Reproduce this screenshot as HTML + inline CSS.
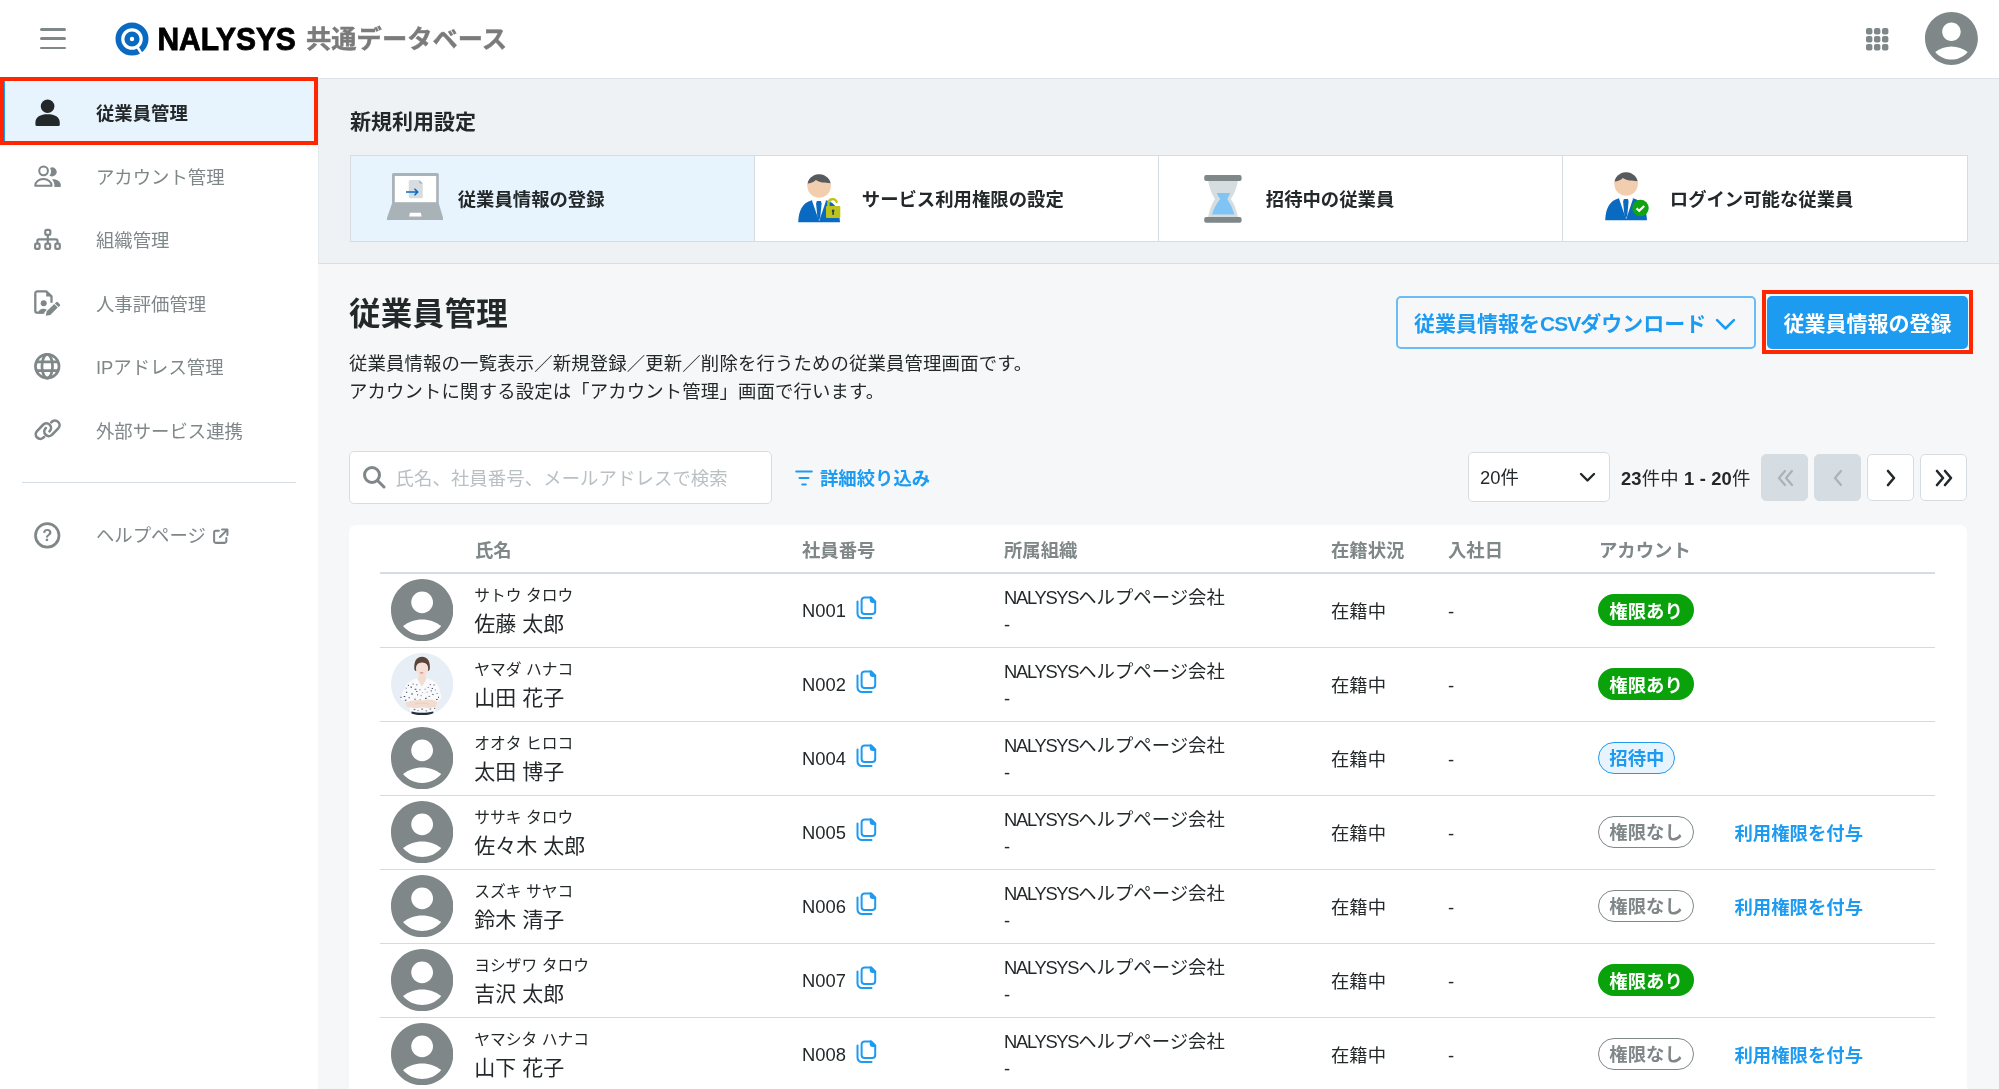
<!DOCTYPE html>
<html lang="ja">
<head>
<meta charset="utf-8">
<title>NALYSYS 共通データベース</title>
<style>
*{box-sizing:border-box;margin:0;padding:0}
html,body{width:1999px;height:1089px;overflow:hidden;background:#f6f7f9}
body{font-family:"Liberation Sans","Noto Sans CJK JP",sans-serif;color:#23282a;position:relative;font-size:18.375px;line-height:1.5}
body>*{will-change:transform}
/* header */
#hd{position:absolute;left:0;top:0;width:1999px;height:78.500px;background:#fff;border-bottom:1px solid #dde3e8}
#hd .ham{position:absolute;left:40px;top:28px;width:26px;height:22px}
#hd .ham i{position:absolute;left:0;width:26px;height:2.700px;border-radius:2px;background:#7f8789}
#logo{position:absolute;left:115.300px;top:21.700px;width:34px;height:34px}
#brand{position:absolute;left:157.500px;top:17.400px;font-weight:700;font-size:30px;line-height:44px;color:#000;letter-spacing:-0.100px;white-space:nowrap;-webkit-text-stroke:0.800px #000;transform:scale(1,1.070);transform-origin:0 50%}
#sub{position:absolute;left:306px;top:17px;font-weight:700;font-size:25.300px;line-height:44px;color:#7b7b7b;white-space:nowrap;-webkit-text-stroke:0.400px #7b7b7b}
#grid{position:absolute;left:1866.200px;top:27.700px;width:22.400px;height:22.400px;overflow:visible}
#me{position:absolute;left:1925.100px;top:12.300px;width:52.900px;height:52.900px}
/* sidebar */
#sb{position:absolute;left:0;top:78.500px;width:317.500px;height:1011px;background:#fff}
.mi{position:absolute;left:0;width:318px;height:63.5px;color:#7f8789;font-size:18.375px;line-height:63.5px;white-space:nowrap}
.mi span{position:absolute;left:96px;top:1px}
.mi svg{position:absolute;left:33px;top:18px;width:28px;height:28px}
#act{position:absolute;left:0;top:76.600px;width:318.100px;height:68px;border:4px solid #ff2600;background:#e8f4fd}
#act:before{content:"";position:absolute;left:0;top:0;width:1.200px;height:60px;background:#1d9bf0}
#sbdiv{position:absolute;left:22px;top:482px;width:274px;height:1px;background:#d5dde3}
/* top band */
#band{position:absolute;left:317.500px;top:78.500px;width:1682px;height:184.700px;background:#eef2f5;border-bottom:1px solid #d9e0e5;border-left:1px solid #e3e8ec}
#bt{position:absolute;left:350px;top:107px;font-size:21px;font-weight:700;line-height:30px;color:#23282a}
#cards{position:absolute;left:350px;top:154.700px;width:1617.500px;height:87px;border:1px solid #d5dde3;background:#fff}
.card{position:absolute;top:0;height:85px;width:404px;border-left:1px solid #d5dde3;font-weight:700;font-size:18.375px;line-height:85px;color:#23282a;white-space:nowrap}
.card span{position:absolute;left:106.700px;top:0.900px}
.card svg{position:absolute}
/* page head */
#h1{position:absolute;left:349px;top:290px;font-size:31.5px;font-weight:700;line-height:48px;color:#23282a;letter-spacing:0.3px}
#desc{position:absolute;left:349px;top:350px;font-size:18.375px;letter-spacing:0.160px;line-height:27.500px;color:#23282a;white-space:nowrap}
#csv{position:absolute;left:1396px;top:295.500px;width:359.500px;height:53.400px;border:2px solid #6bbcf5;border-radius:5px;color:#1d9bf0;font-weight:700;font-size:21px;line-height:52.500px;white-space:nowrap;padding-left:16px}
#csv svg{position:absolute;left:316.500px;top:19.500px;width:21px;height:12.600px}
#regbox{position:absolute;left:1761.800px;top:290.100px;width:211.400px;height:63.500px;border:4px solid #ff2600}
#reg{position:absolute;left:1766.600px;top:295.500px;width:201.200px;height:53.400px;border-radius:5px;background:#1d9bf0;color:#fff;font-weight:700;font-size:21px;line-height:56.500px;text-align:center;white-space:nowrap}
/* toolbar */
#search{position:absolute;left:349px;top:451px;width:423px;height:53px;border:1px solid #d5dde3;border-radius:5px;background:#fff;color:#b9c0c4;font-size:18.375px;line-height:51px;white-space:nowrap}
#search span{position:absolute;left:45.500px;top:1px;letter-spacing:0.100px}
#search svg{position:absolute;left:12.300px;top:13px;width:24px;height:24px}
#filter{position:absolute;left:795px;top:463px;color:#1d9bf0;font-weight:700;font-size:18.375px;line-height:32px;white-space:nowrap}
#filter svg{position:absolute;left:0;top:6.500px;width:18px;height:16px}
#filter span{margin-left:25px}
#sel{position:absolute;left:1468px;top:452.300px;width:142px;height:50px;border:1px solid #d5dde3;border-radius:5px;background:#fff;font-size:18.375px;line-height:50px;padding-left:11px;color:#23282a}
#sel svg{position:absolute;left:110px;top:19px;width:17px;height:11px}
#cnt{position:absolute;left:1621px;top:463px;letter-spacing:0.150px;font-size:18.375px;line-height:32px;white-space:nowrap;color:#23282a}
#cnt b{font-weight:700}
.pg{position:absolute;top:454px;width:47px;height:47px;border-radius:5px;border:1px solid #d5dde3;background:#fff}
.pg.dis{background:#d5dde3;border-color:#d5dde3}
.pg svg{position:absolute;left:12px;top:12px;width:22px;height:22px}
/* table */
#tbl{position:absolute;left:349px;top:525px;width:1618px;height:600px;background:#fff;border-radius:7px}
.th{position:absolute;top:10.700px;font-size:18.375px;font-weight:700;color:#7f8789;line-height:30px;white-space:nowrap}
#thline{position:absolute;left:31px;top:47.100px;width:1555px;height:1.5px;background:#d5dde3}
.row{position:absolute;left:31px;width:1555px;height:74.600px;border-bottom:1.500px solid #d3dbe1}
.row .av{position:absolute;left:11.200px;top:5.800px;width:62.300px;height:62.300px}
.row div,.row span{position:absolute;white-space:nowrap}
.kana{left:94.300px;top:10.500px;font-size:15.75px;line-height:24px}
.nm{left:94.300px;top:34.500px;font-size:21px;line-height:32px}
.no{left:422px;top:23.300px;font-size:18.375px;line-height:30px}
.no .cp{position:absolute;left:53.500px;top:-0.800px;width:21px;height:24px}
.row .org .lt{position:static;letter-spacing:-1.300px}
.org{left:624px;top:10.100px;font-size:18.375px;line-height:30px}
.org2{left:624px;top:37.400px;font-size:18.375px;line-height:30px}
.st{left:951px;top:24px;font-size:18.375px;line-height:30px}
.jd{left:1068px;top:24px;font-size:18.375px;line-height:30px}
.bd{left:1218.300px;top:21px;height:32px;border-radius:16px;font-size:18.375px;font-weight:700;line-height:30px;padding:0 10px}
.bd.ari{background:#0aa20a;color:#fff;line-height:35.400px;padding:0 11px}
.bd.inv{background:#e8f4fd;color:#1d9bf0;border:1.800px solid #1d9bf0;line-height:31.800px}
.bd.nashi{background:#fff;color:#7f8789;border:1.800px solid #7f8789;line-height:31.800px}
.lk{left:1354.500px;top:24px;color:#1d9bf0;font-weight:700;font-size:18.375px;line-height:30px}
</style>
</head>
<body>
<!-- table -->
<div id="tbl">
<div class="th" style="left:126px">氏名</div>
<div class="th" style="left:453px">社員番号</div>
<div class="th" style="left:655px">所属組織</div>
<div class="th" style="left:982px">在籍状況</div>
<div class="th" style="left:1099px">入社日</div>
<div class="th" style="left:1250px">アカウント</div>
<div id="thline"></div>
<div class="row" style="top:48px">
<svg class="av" viewBox="2 2 20 20"><path fill="#7f8789" d="M12 2C6.480 2 2 6.480 2 12s4.480 10 10 10 10-4.480 10-10S17.520 2 12 2zm0 4c1.930 0 3.500 1.570 3.500 3.500S13.930 13 12 13s-3.500-1.570-3.500-3.500S10.070 6 12 6zm0 14c-2.030 0-4.430-.820-6.140-2.880C7.550 15.800 9.680 15 12 15s4.450.800 6.140 2.120C16.430 19.180 14.030 20 12 20z"/></svg>
<div class="kana">サトウ タロウ</div><div class="nm">佐藤 太郎</div>
<div class="no">N001<svg class="cp" viewBox="0 0 21 24" fill="none" stroke="#1d9bf0" stroke-width="2" stroke-linecap="round" stroke-linejoin="round"><path d="M8.600 1.400h6.600l4 4v9.500a3 3 0 0 1-3 3h-7.600a3 3 0 0 1-3-3v-10.500a3 3 0 0 1 3-3z"/><path d="M14.700 1.400v2.600a2 2 0 0 0 2 2h2.500z" fill="#1d9bf0"/><path d="M1.500 5.500v12.100a4.500 4.500 0 0 0 4.500 4.500h9.500"/></svg></div>
<div class="org"><span class="lt">NALYSYS</span>ヘルプページ会社</div><div class="org2">-</div>
<div class="st">在籍中</div><div class="jd">-</div>
<span class="bd ari">権限あり</span>
</div>
<div class="row" style="top:122px">
<svg class="av" viewBox="0 0 62 62"><defs><clipPath id="cp"><circle cx="31" cy="31" r="31"/></clipPath></defs><g clip-path="url(#cp)"><rect width="62" height="62" fill="#e8eef5"/><path d="M23.300 16.500c-1-7.500 2-12.800 7.600-12.800s8.600 5.300 7.600 12.800l-1.200 1.500h-12.800z" fill="#5a4338"/><ellipse cx="30.900" cy="15.600" rx="6.100" ry="7.200" fill="#f4e0d6"/><path d="M24.600 12.800c1.500-3.800 4-5.300 6.400-5.300s5 1.500 6.300 5.300c-2-2.400-4-3.300-6.300-3.300s-4.400.900-6.400 3.300z" fill="#5a4338"/><ellipse cx="30.500" cy="19.700" rx="1.900" ry="0.900" fill="#e9929b"/><path d="M27.600 21.500h6.700v8h-6.700z" fill="#f3ddd2"/><path d="M14 33c3-4.500 8-6.500 12.500-8l4.300 7.500 4.500-7.500c4.500 1.500 9.500 3.500 12 8l3.200 11.500-4.500 4.500-1.500 9.500h-25.500l-1.500-9.500-8.500-3.500z" fill="#f9fafc"/><path d="M26 25.500l4.800 8 4.700-8c-1.500-.800-2.500-1.200-3.200-1.500h-3.200c-.900.400-2 .900-3.100 1.500z" fill="#f3ddd2"/><rect x="14.5" y="34.5" width="1.1" height="1" fill="#6a6a8c"/><rect x="16.8" y="31.6" width="0.9" height="1.2" fill="#3b3a5c"/><rect x="19.5" y="33.4" width="1.3" height="1.2" fill="#3b3a5c"/><rect x="21.5" y="30.5" width="1.1" height="0.8" fill="#3b3a5c"/><rect x="23.6" y="35.6" width="1.6" height="1" fill="#3b3a5c"/><rect x="25.2" y="31.3" width="1.1" height="0.8" fill="#3b3a5c"/><rect x="27.9" y="36.2" width="1.6" height="0.8" fill="#8b7fa0"/><rect x="30.8" y="39.2" width="0.9" height="0.8" fill="#8b7fa0"/><rect x="33.5" y="35.5" width="0.9" height="1.2" fill="#8b7fa0"/><rect x="36.3" y="33.8" width="1.6" height="0.8" fill="#8b7fa0"/><rect x="38.6" y="30.8" width="0.9" height="1.2" fill="#4b4a70"/><rect x="40.5" y="34.8" width="1.3" height="1" fill="#4b4a70"/><rect x="42.4" y="31.2" width="0.9" height="1.2" fill="#4b4a70"/><rect x="43.6" y="36.4" width="1.1" height="0.8" fill="#6a6a8c"/><rect x="45.3" y="39.8" width="1.1" height="1" fill="#8b7fa0"/><rect x="46.8" y="43.5" width="0.9" height="1.2" fill="#3b3a5c"/><rect x="41.2" y="40.8" width="1.1" height="1" fill="#3b3a5c"/><rect x="37.3" y="42.7" width="1.6" height="1" fill="#8b7fa0"/><rect x="33.9" y="44.6" width="1.6" height="1" fill="#2e2e48"/><rect x="29.4" y="42.1" width="1.1" height="0.8" fill="#6a6a8c"/><rect x="26.1" y="41.0" width="0.9" height="1.2" fill="#4b4a70"/><rect x="23.2" y="45.5" width="1.6" height="1" fill="#6a6a8c"/><rect x="20.3" y="40.2" width="1.3" height="1.2" fill="#2e2e48"/><rect x="17.6" y="43.8" width="0.9" height="1.2" fill="#3b3a5c"/><rect x="15.0" y="38.6" width="1.1" height="1" fill="#2e2e48"/><rect x="12.6" y="42.8" width="1.6" height="1" fill="#4b4a70"/><rect x="9.5" y="43.6" width="0.9" height="1.2" fill="#3b3a5c"/><rect x="18.9" y="48.1" width="1.3" height="1" fill="#8b7fa0"/><rect x="22.6" y="55.6" width="1.6" height="1.2" fill="#6a6a8c"/><rect x="26.5" y="56.8" width="0.9" height="0.8" fill="#2e2e48"/><rect x="30.2" y="55.3" width="1.6" height="1.2" fill="#6a6a8c"/><rect x="34.6" y="56.9" width="0.9" height="1.2" fill="#3b3a5c"/><rect x="38.4" y="55.2" width="1.6" height="1" fill="#6a6a8c"/><rect x="42.8" y="54.6" width="1.3" height="0.8" fill="#2e2e48"/><rect x="25.0" y="37.8" width="1.3" height="0.8" fill="#2e2e48"/><rect x="35.5" y="38.5" width="0.9" height="1" fill="#8b7fa0"/><rect x="39.5" y="37.2" width="1.1" height="1" fill="#3b3a5c"/><rect x="28.5" y="46.2" width="1.1" height="1" fill="#4b4a70"/><rect x="44.8" y="45.8" width="1.6" height="0.8" fill="#2e2e48"/><rect x="13.8" y="46.5" width="1.6" height="1" fill="#4b4a70"/><path d="M14.600 49.500c6-2.500 12-3.300 17-2.200 5-1.600 10-1.300 14.300 1.200l-.6 4.800c-5 1.800-10 1.800-14.200.6-5 1.300-10.500 1.200-15.500-.6z" fill="#f2dccf"/><path d="M24 50.800c4-1.200 9-1.500 14 .2" stroke="#e2c4b4" stroke-width="0.600" fill="none"/><path d="M20.500 58.300c6 1.600 15 1.600 21.500 0l.5 4h-22.500z" fill="#262c3a"/></g></svg>
<div class="kana">ヤマダ ハナコ</div><div class="nm">山田 花子</div>
<div class="no">N002<svg class="cp" viewBox="0 0 21 24" fill="none" stroke="#1d9bf0" stroke-width="2" stroke-linecap="round" stroke-linejoin="round"><path d="M8.600 1.400h6.600l4 4v9.500a3 3 0 0 1-3 3h-7.600a3 3 0 0 1-3-3v-10.500a3 3 0 0 1 3-3z"/><path d="M14.700 1.400v2.600a2 2 0 0 0 2 2h2.500z" fill="#1d9bf0"/><path d="M1.500 5.500v12.100a4.500 4.500 0 0 0 4.500 4.500h9.500"/></svg></div>
<div class="org"><span class="lt">NALYSYS</span>ヘルプページ会社</div><div class="org2">-</div>
<div class="st">在籍中</div><div class="jd">-</div>
<span class="bd ari">権限あり</span>
</div>
<div class="row" style="top:196px">
<svg class="av" viewBox="2 2 20 20"><path fill="#7f8789" d="M12 2C6.480 2 2 6.480 2 12s4.480 10 10 10 10-4.480 10-10S17.520 2 12 2zm0 4c1.930 0 3.500 1.570 3.500 3.500S13.930 13 12 13s-3.500-1.570-3.500-3.500S10.070 6 12 6zm0 14c-2.030 0-4.430-.820-6.140-2.880C7.550 15.800 9.680 15 12 15s4.450.800 6.140 2.120C16.430 19.180 14.030 20 12 20z"/></svg>
<div class="kana">オオタ ヒロコ</div><div class="nm">太田 博子</div>
<div class="no">N004<svg class="cp" viewBox="0 0 21 24" fill="none" stroke="#1d9bf0" stroke-width="2" stroke-linecap="round" stroke-linejoin="round"><path d="M8.600 1.400h6.600l4 4v9.500a3 3 0 0 1-3 3h-7.600a3 3 0 0 1-3-3v-10.500a3 3 0 0 1 3-3z"/><path d="M14.700 1.400v2.600a2 2 0 0 0 2 2h2.500z" fill="#1d9bf0"/><path d="M1.500 5.500v12.100a4.500 4.500 0 0 0 4.500 4.500h9.500"/></svg></div>
<div class="org"><span class="lt">NALYSYS</span>ヘルプページ会社</div><div class="org2">-</div>
<div class="st">在籍中</div><div class="jd">-</div>
<span class="bd inv">招待中</span>
</div>
<div class="row" style="top:270px">
<svg class="av" viewBox="2 2 20 20"><path fill="#7f8789" d="M12 2C6.480 2 2 6.480 2 12s4.480 10 10 10 10-4.480 10-10S17.520 2 12 2zm0 4c1.930 0 3.500 1.570 3.500 3.500S13.930 13 12 13s-3.500-1.570-3.500-3.500S10.070 6 12 6zm0 14c-2.030 0-4.430-.820-6.140-2.880C7.550 15.800 9.680 15 12 15s4.450.800 6.140 2.120C16.430 19.180 14.030 20 12 20z"/></svg>
<div class="kana">ササキ タロウ</div><div class="nm">佐々木 太郎</div>
<div class="no">N005<svg class="cp" viewBox="0 0 21 24" fill="none" stroke="#1d9bf0" stroke-width="2" stroke-linecap="round" stroke-linejoin="round"><path d="M8.600 1.400h6.600l4 4v9.500a3 3 0 0 1-3 3h-7.600a3 3 0 0 1-3-3v-10.500a3 3 0 0 1 3-3z"/><path d="M14.700 1.400v2.600a2 2 0 0 0 2 2h2.500z" fill="#1d9bf0"/><path d="M1.500 5.500v12.100a4.500 4.500 0 0 0 4.500 4.500h9.500"/></svg></div>
<div class="org"><span class="lt">NALYSYS</span>ヘルプページ会社</div><div class="org2">-</div>
<div class="st">在籍中</div><div class="jd">-</div>
<span class="bd nashi">権限なし</span><span class="lk">利用権限を付与</span>
</div>
<div class="row" style="top:344px">
<svg class="av" viewBox="2 2 20 20"><path fill="#7f8789" d="M12 2C6.480 2 2 6.480 2 12s4.480 10 10 10 10-4.480 10-10S17.520 2 12 2zm0 4c1.930 0 3.500 1.570 3.500 3.500S13.930 13 12 13s-3.500-1.570-3.500-3.500S10.070 6 12 6zm0 14c-2.030 0-4.430-.820-6.140-2.880C7.550 15.800 9.680 15 12 15s4.450.800 6.140 2.120C16.430 19.180 14.030 20 12 20z"/></svg>
<div class="kana">スズキ サヤコ</div><div class="nm">鈴木 清子</div>
<div class="no">N006<svg class="cp" viewBox="0 0 21 24" fill="none" stroke="#1d9bf0" stroke-width="2" stroke-linecap="round" stroke-linejoin="round"><path d="M8.600 1.400h6.600l4 4v9.500a3 3 0 0 1-3 3h-7.600a3 3 0 0 1-3-3v-10.500a3 3 0 0 1 3-3z"/><path d="M14.700 1.400v2.600a2 2 0 0 0 2 2h2.500z" fill="#1d9bf0"/><path d="M1.500 5.500v12.100a4.500 4.500 0 0 0 4.500 4.500h9.500"/></svg></div>
<div class="org"><span class="lt">NALYSYS</span>ヘルプページ会社</div><div class="org2">-</div>
<div class="st">在籍中</div><div class="jd">-</div>
<span class="bd nashi">権限なし</span><span class="lk">利用権限を付与</span>
</div>
<div class="row" style="top:418px">
<svg class="av" viewBox="2 2 20 20"><path fill="#7f8789" d="M12 2C6.480 2 2 6.480 2 12s4.480 10 10 10 10-4.480 10-10S17.520 2 12 2zm0 4c1.930 0 3.500 1.570 3.500 3.500S13.930 13 12 13s-3.500-1.570-3.500-3.500S10.070 6 12 6zm0 14c-2.030 0-4.430-.820-6.140-2.880C7.550 15.800 9.680 15 12 15s4.450.800 6.140 2.120C16.430 19.180 14.030 20 12 20z"/></svg>
<div class="kana">ヨシザワ タロウ</div><div class="nm">吉沢 太郎</div>
<div class="no">N007<svg class="cp" viewBox="0 0 21 24" fill="none" stroke="#1d9bf0" stroke-width="2" stroke-linecap="round" stroke-linejoin="round"><path d="M8.600 1.400h6.600l4 4v9.500a3 3 0 0 1-3 3h-7.600a3 3 0 0 1-3-3v-10.500a3 3 0 0 1 3-3z"/><path d="M14.700 1.400v2.600a2 2 0 0 0 2 2h2.500z" fill="#1d9bf0"/><path d="M1.500 5.500v12.100a4.500 4.500 0 0 0 4.500 4.500h9.500"/></svg></div>
<div class="org"><span class="lt">NALYSYS</span>ヘルプページ会社</div><div class="org2">-</div>
<div class="st">在籍中</div><div class="jd">-</div>
<span class="bd ari">権限あり</span>
</div>
<div class="row" style="top:492px">
<svg class="av" viewBox="2 2 20 20"><path fill="#7f8789" d="M12 2C6.480 2 2 6.480 2 12s4.480 10 10 10 10-4.480 10-10S17.520 2 12 2zm0 4c1.930 0 3.500 1.570 3.500 3.500S13.930 13 12 13s-3.500-1.570-3.500-3.500S10.070 6 12 6zm0 14c-2.030 0-4.430-.820-6.140-2.880C7.550 15.800 9.680 15 12 15s4.450.800 6.140 2.120C16.430 19.180 14.030 20 12 20z"/></svg>
<div class="kana">ヤマシタ ハナコ</div><div class="nm">山下 花子</div>
<div class="no">N008<svg class="cp" viewBox="0 0 21 24" fill="none" stroke="#1d9bf0" stroke-width="2" stroke-linecap="round" stroke-linejoin="round"><path d="M8.600 1.400h6.600l4 4v9.500a3 3 0 0 1-3 3h-7.600a3 3 0 0 1-3-3v-10.500a3 3 0 0 1 3-3z"/><path d="M14.700 1.400v2.600a2 2 0 0 0 2 2h2.500z" fill="#1d9bf0"/><path d="M1.500 5.500v12.100a4.500 4.500 0 0 0 4.500 4.500h9.500"/></svg></div>
<div class="org"><span class="lt">NALYSYS</span>ヘルプページ会社</div><div class="org2">-</div>
<div class="st">在籍中</div><div class="jd">-</div>
<span class="bd nashi">権限なし</span><span class="lk">利用権限を付与</span>
</div>
</div>

<!-- header -->
<div id="hd">
<div class="ham"><i style="top:0.200px"></i><i style="top:9.400px"></i><i style="top:18.700px"></i></div>
<svg id="logo" viewBox="0 0 34 34"><circle cx="17" cy="17" r="13.650" fill="none" stroke="#0a6ac2" stroke-width="5.700"/><circle cx="17" cy="17" r="4.900" fill="none" stroke="#0a6ac2" stroke-width="5.400"/><path d="M21.500 23.500l5.500 9" stroke="#fff" stroke-width="2.400" fill="none"/></svg>
<div id="brand">NALYSYS</div>
<div id="sub">共通データベース</div>
<svg id="grid" viewBox="0 0 22.400 22.400" fill="#7f8789"><rect x="0" y="0" width="6.400" height="6.400" rx="2"/><rect x="8" y="0" width="6.400" height="6.400" rx="2"/><rect x="16" y="0" width="6.400" height="6.400" rx="2"/><rect x="0" y="8" width="6.400" height="6.400" rx="2"/><rect x="8" y="8" width="6.400" height="6.400" rx="2"/><rect x="16" y="8" width="6.400" height="6.400" rx="2"/><rect x="0" y="16" width="6.400" height="6.400" rx="2"/><rect x="8" y="16" width="6.400" height="6.400" rx="2"/><rect x="16" y="16" width="6.400" height="6.400" rx="2"/></svg>
<svg id="me" viewBox="2 2 20 20"><path fill="#7f8789" d="M12 2C6.480 2 2 6.480 2 12s4.480 10 10 10 10-4.480 10-10S17.520 2 12 2zm0 4c1.930 0 3.500 1.570 3.500 3.500S13.930 13 12 13s-3.500-1.570-3.500-3.500S10.070 6 12 6zm0 14c-2.030 0-4.430-.820-6.140-2.880C7.550 15.800 9.680 15 12 15s4.450.800 6.140 2.120C16.430 19.180 14.030 20 12 20z"/></svg>
</div>

<!-- sidebar -->
<div id="sb"></div>
<div id="act"></div>
<div class="mi" style="top:81px;color:#23282a;font-weight:700"><svg viewBox="0 0 28 28" fill="#23282a"><circle cx="14.600" cy="7.300" r="6.800"/><path d="M2.400 25.400v-1.500c0-6 5-8.600 12.200-8.600s12.200 2.600 12.200 8.600v1.500a1.500 1.500 0 0 1-1.500 1.500h-21.400a1.500 1.500 0 0 1-1.500-1.500z"/></svg><span>従業員管理</span></div>
<div class="mi" style="top:144.500px"><svg viewBox="0 0 28 28" fill="none" stroke="#7f8789" stroke-width="2.200"><g stroke-width="2"><circle cx="10.570" cy="7.870" r="4.350"/><path d="M2.200 22.750c0-4 3.500-6.650 8.200-6.650s8.200 2.650 8.200 6.650z" stroke-linejoin="round"/></g><path d="M17.100 4.900A4.500 4.500 0 1 1 16.500 12.600A7.200 7.200 0 0 0 17.100 4.900zM19 16.200c5.200-.300 8.850 2.400 8.850 6v.700a1 1 0 0 1-1 1h-5.450c.300-3-.500-5.500-2.400-7.700z" fill="#7f8789" stroke="none"/></svg><span>アカウント管理</span></div>
<div class="mi" style="top:208px"><svg viewBox="0 0 28 28" fill="none" stroke="#7f8789" stroke-width="2.200"><rect x="12.300" y="3.900" width="5" height="5" rx="1.400"/><rect x="2.100" y="17.700" width="4.500" height="5.200" rx="1.200"/><rect x="12.300" y="17.700" width="4.800" height="5.200" rx="1.200"/><rect x="22.300" y="17.700" width="4.500" height="5.200" rx="1.200"/><path d="M14.800 9.500v8M4.400 17v-2.200a1.500 1.500 0 0 1 1.500-1.500h17.100a1.500 1.500 0 0 1 1.500 1.500v2.200"/></svg><span>組織管理</span></div>
<div class="mi" style="top:271.500px"><svg viewBox="0 0 28 28" fill="none" stroke="#7f8789" stroke-width="2.300" stroke-linejoin="round"><path d="M11.300 22.700h-7a2 2 0 0 1-2-2v-17.300a2 2 0 0 1 2-2h8.900l5.300 5v6.400"/><path d="M13.200 1v5.400h5.600z" fill="#7f8789" stroke="none"/><circle cx="10.700" cy="13.300" r="3" fill="#7f8789" stroke="none"/><path d="M5 23.500c.200-2.900 2.400-4.700 5.500-4.700 1.300 0 2.500.300 3.400 1l-3.700 3.700z" fill="#7f8789" stroke="none"/><path d="M12.800 25.800l.900-4.500 7.500-7.200 3.500 3.500-7.400 7.300zM21.900 13.500l1.300-1.200a1.200 1.200 0 0 1 1.700 0l1.900 1.900a1.200 1.200 0 0 1 0 1.700l-1.300 1.200z" fill="#7f8789" stroke="none"/></svg><span>人事評価管理</span></div>
<div class="mi" style="top:335px"><svg viewBox="0 0 28 28" fill="none" stroke="#7f8789" stroke-width="2.700"><circle cx="14.250" cy="13.250" r="11.800"/><ellipse cx="14.250" cy="13.250" rx="5.300" ry="11.800"/><path d="M3.400 8.800h21.700M3.400 17.700h21.700"/></svg><span>IPアドレス管理</span></div>
<div class="mi" style="top:398.500px"><svg viewBox="0 0 28 28" fill="none" stroke="#7f8789" stroke-width="2.600"><path stroke-linecap="round" transform="translate(10.380 14.090) rotate(-46)" d="M-3.800 4.600L-4.375 4.600A4.600 4.600 0 0 1-4.375-4.600L4.375-4.600A4.600 4.600 0 0 1 4.375 4.600L4 4.600"/><path stroke-linecap="round" transform="translate(18.910 11.330) rotate(-46)" d="M3.800-4.600L4.375-4.600A4.600 4.600 0 0 1 4.375 4.600L-4.375 4.600A4.600 4.600 0 0 1-4.375-4.600L-4-4.600"/></svg><span>外部サービス連携</span></div>
<div id="sbdiv"></div>
<div class="mi" style="top:503px"><svg viewBox="0 0 28 28" fill="none" stroke="#7f8789" stroke-width="2.700"><circle cx="14.250" cy="14.450" r="11.750"/><text x="14.250" y="20.300" font-family="Liberation Sans, sans-serif" font-size="16.500" font-weight="700" fill="#7f8789" stroke="none" text-anchor="middle">?</text></svg><span>ヘルプページ</span><svg viewBox="0 0 16 16" style="left:211.500px;top:24.500px;width:17px;height:17px" fill="none" stroke="#7f8789" stroke-width="1.900" stroke-linecap="round" stroke-linejoin="round"><path d="M6.500 2.500h-3a1.500 1.500 0 0 0-1.500 1.500v8.500a1.500 1.500 0 0 0 1.500 1.500h8.500a1.500 1.500 0 0 0 1.500-1.500v-3"/><path d="M9.500 1.500h5v5M14 2l-6.500 6.500"/></svg></div>

<!-- band -->
<div id="band"></div>
<div id="bt">新規利用設定</div>
<div id="cards">
<div class="card" style="left:0;border-left:none;background:#e8f4fd;width:403.500px">
<svg viewBox="0 0 56.200 47.500" style="left:36px;top:16.500px;width:56.200px;height:47.500px"><rect x="5" y="0" width="46.800" height="32" rx="1.500" fill="#a9b2b6"/><rect x="7.800" y="3" width="41.400" height="26.200" fill="#fff"/><path d="M5 30.600h46.800l4.400 14.400v1.500a1 1 0 0 1-1 1h-54.200a1 1 0 0 1-1-1v-1.500z" fill="#a9b2b6"/><path d="M23 39.800h10.800l.900 3.700h-12.600z" fill="#fff"/><path d="M23.200 6.900h9.200l3.400 3.500v13.300a1.500 1.500 0 0 1-1.500 1.500h-11.100a1.500 1.500 0 0 1-1.500-1.500v-15.300a1.500 1.500 0 0 1 1.500-1.500z" fill="#d6dde1"/><path d="M32.400 6.900l3.400 3.500h-3.400z" fill="#a9b2b6"/><path d="M19 19h11.500M27.500 15.800l3.200 3.200-3.200 3.200" fill="none" stroke="#0a6ac2" stroke-width="1.500"/></svg>
<span>従業員情報の登録</span></div>
<div class="card" style="left:403.100px">
<svg viewBox="0 0 44 50" style="left:41.800px;top:17px;width:44px;height:50px"><circle cx="22.100" cy="12.900" r="11.750" fill="#f3ceae"/><path d="M10.350 12.900a11.750 11.750 0 0 1 23.500 0c0-1.200-.100-1.900-.300-2.700-5.500-.300-11.500-.600-14.700-3.100-2 2.300-5.500 3.300-8.300 3.400-.150.800-.200 1.600-.200 2.400z" fill="#555b5e"/><path d="M1.200 49.200c.600-12 4.200-19.500 13.700-22l7.200 2.800 7.100-2.800c9.500 2.500 13.200 10 13.800 22z" fill="#0a6ac2"/><path d="M14.900 27.200h14.300l-7.100 21z" fill="#fff"/><path d="M19.900 27.900h4l.700 2.600-1.300 13.700-1.600 3.600-1.300-3.600-1.300-13.700z" fill="#0a6ac2"/><path d="M31.400 33.500v-3.200a4.300 4.300 0 0 1 8.300-1.400" fill="none" stroke="#bcc41c" stroke-width="2.400" stroke-linecap="round"/><rect x="29" y="33" width="14.300" height="12.100" rx="1" fill="#bcc41c"/><circle cx="36.100" cy="37.800" r="1.350" fill="#2b3a55"/><path d="M35.500 38h1.200l.300 3.800h-1.800z" fill="#2b3a55"/></svg>
<span>サービス利用権限の設定</span></div>
<div class="card" style="left:807.100px">
<svg viewBox="0 0 38 48" style="left:45.100px;top:18.500px;width:38px;height:48px"><path d="M4.100 5.500h29.900q-2 11.500-7.200 18.500 5.200 7 7.200 18.500h-29.900q2-11.500 6.900-18.500-4.900-7-6.900-18.500z" fill="#d6dde1"/><path d="M12.900 18h13.200q-1.100 3.500-2.800 6 4.700 7 7.200 15.400h-22.600q2.600-8.400 8.300-15.400-2.200-2.500-3.300-6z" fill="#7fc4f4"/><rect x="0.200" y="0.100" width="37.400" height="5.800" rx="2" fill="#7f8789"/><rect x="0.200" y="42" width="37.400" height="5.800" rx="2" fill="#7f8789"/></svg>
<span>招待中の従業員</span></div>
<div class="card" style="left:1211.100px;width:404.900px">
<svg viewBox="0 0 46 50" style="left:41.200px;top:15px;width:46px;height:50px"><circle cx="22.100" cy="12.900" r="11.750" fill="#f3ceae"/><path d="M10.350 12.900a11.750 11.750 0 0 1 23.500 0c0-1.200-.100-1.900-.300-2.700-5.500-.300-11.500-.600-14.700-3.100-2 2.300-5.500 3.300-8.300 3.400-.150.800-.200 1.600-.200 2.400z" fill="#555b5e"/><path d="M1.200 49.200c.600-12 4.200-19.500 13.700-22l7.200 2.800 7.100-2.800c9.500 2.500 13.200 10 13.800 22z" fill="#0a6ac2"/><path d="M14.900 27.200h14.300l-7.100 21z" fill="#fff"/><path d="M19.900 27.900h4l.700 2.600-1.300 13.700-1.600 3.600-1.300-3.600-1.300-13.700z" fill="#0a6ac2"/><circle cx="36.500" cy="37.100" r="8.250" fill="#10a510"/><path d="M32.500 37.400l2.700 2.400 5-4.800" fill="none" stroke="#fff" stroke-width="2.200"/></svg>
<span>ログイン可能な従業員</span></div>
</div>

<!-- page head -->
<div id="h1">従業員管理</div>
<div id="desc">従業員情報の一覧表示／新規登録／更新／削除を行うための従業員管理画面です。<br>アカウントに関する設定は「アカウント管理」画面で行います。</div>
<div id="csv">従業員情報を<span style="letter-spacing:-1px">CSV</span>ダウンロード<svg viewBox="0 0 20 12" fill="none" stroke="#1d9bf0" stroke-width="2.400" stroke-linecap="round" stroke-linejoin="round"><path d="M2 2l8 8 8-8"/></svg></div>
<div id="regbox"></div>
<div id="reg">従業員情報の登録</div>

<!-- toolbar -->
<div id="search"><svg viewBox="0 0 24 24" fill="none" stroke="#7f8789" stroke-width="3" stroke-linecap="round"><circle cx="10" cy="10" r="7.500"/><path d="M15.500 15.500l6.500 6.500"/></svg><span>氏名、社員番号、メールアドレスで検索</span></div>
<div id="filter"><svg viewBox="0 0 18 16" fill="none" stroke="#1d9bf0" stroke-width="2" stroke-linecap="round"><path d="M1.200 1.500h15.600M4.500 8h9M7.200 14.500h3.600"/></svg><span>詳細絞り込み</span></div>
<div id="sel">20件<svg viewBox="0 0 17 11" fill="none" stroke="#23282a" stroke-width="2.400" stroke-linecap="round" stroke-linejoin="round"><path d="M2 2l6.500 6.500 6.500-6.500"/></svg></div>
<div id="cnt"><b>23</b>件中 <b>1 - 20</b>件</div>
<div class="pg dis" style="left:1761.200px"><svg viewBox="0 0 22 22" fill="none" stroke="#a9b2b6" stroke-width="2.200" stroke-linecap="round" stroke-linejoin="round"><path d="M11 4l-6 7 6 7M18 4l-6 7 6 7"/></svg></div>
<div class="pg dis" style="left:1814.200px"><svg viewBox="0 0 22 22" fill="none" stroke="#a9b2b6" stroke-width="2.200" stroke-linecap="round" stroke-linejoin="round"><path d="M14 4l-6 7 6 7"/></svg></div>
<div class="pg" style="left:1867.200px"><svg viewBox="0 0 22 22" fill="none" stroke="#23282a" stroke-width="2.600" stroke-linecap="round" stroke-linejoin="round"><path d="M8 4l6 7-6 7"/></svg></div>
<div class="pg" style="left:1920.200px"><svg viewBox="0 0 22 22" fill="none" stroke="#23282a" stroke-width="2.600" stroke-linecap="round" stroke-linejoin="round"><path d="M4 4l6 7-6 7M12 4l6 7-6 7"/></svg></div>
</body>
</html>
